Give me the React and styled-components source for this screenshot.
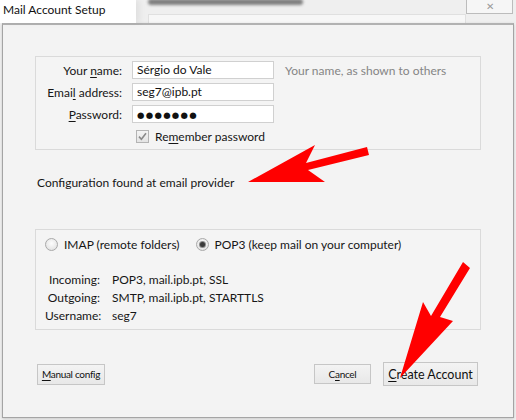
import React from "react";
import styled, { createGlobalStyle } from "styled-components";

const GlobalStyle = createGlobalStyle`
  html, body {
    margin: 0;
    padding: 0;
  }
  body {
    background: #f0f0f0;
    font-family: Lato, "Liberation Sans", sans-serif;
    font-size: 12px;
    color: #161616;
  }
`;

const Screen = styled.div`
  position: relative;
  width: 516px;
  height: 420px;
  overflow: hidden;
  display: flex;
  flex-direction: column;
  background: #f2f2f2;
`;

const TitleStrip = styled.div`
  height: 23px;
  flex-shrink: 0;
  display: flex;
`;

const TitleTab = styled.div`
  position: relative;
  z-index: 1;
  width: 133px;
  padding: 3px 0 0 3px;
  line-height: 14px;
  background: #fff;
  color: #111;
  box-shadow: 4px 0 6px rgba(0, 0, 0, 0.06);
`;

const Backdrop = styled.div`
  flex: 1;
  display: flex;
  background: #efefef;
  overflow: hidden;
`;

const BackColumn = styled.div`
  flex: 1;
  display: flex;
  flex-direction: column;
  padding-left: 12px;
`;

/* smudge of the window behind, out of focus */
const BlurredSmudge = styled.div`
  width: 155px;
  height: 6px;
  margin-top: -1px;
  border-radius: 3px;
  background: #5a5a5a;
  filter: blur(1.8px);
  opacity: 0.75;
`;

const BackPanel = styled.div`
  flex: 1;
  margin-top: 9px;
  border: 1px solid #e0e0e0;
  border-bottom: none;
  background: #f7f7f7;
`;

const CloseButton = styled.div`
  width: 45px;
  height: 13px;
  margin-right: 3px;
  border: 1px solid #bcbcbc;
  border-top: none;
  background: #f6f6f6;
  color: #9a9a9a;
  font-size: 10px;
  line-height: 12px;
  text-align: center;
`;

const Dialog = styled.div`
  flex: 1;
  display: flex;
  flex-direction: column;
  margin: 0 2px 2px 2px;
  padding: 31px 32px 0 32px;
  border: 1px solid #a4a4a4;
  border-top: 2px solid #b2b2b2;
  background: #f3f3f3;
  box-shadow: 0 1px 3px rgba(0, 0, 0, 0.18);
`;

const GroupBox = styled.div`
  height: ${(p) => p.$height}px;
  box-sizing: border-box;
  border: 1px solid #dadada;
  background: #f4f4f4;
`;

const IdentityGrid = styled.div`
  display: grid;
  grid-template-columns: 86px 142px 1fr;
  grid-auto-rows: 18px;
  column-gap: 10px;
  row-gap: 4px;
  align-items: center;
  padding-top: 4px;
`;

const FieldLabel = styled.label`
  text-align: right;
  white-space: nowrap;
`;

const Mnemonic = styled.span`
  text-decoration: underline;
  text-underline-offset: 2px;
`;

const Field = styled.div`
  height: 18px;
  box-sizing: border-box;
  padding: 0 4px;
  border: 1px solid #d0d0d0;
  background: #fff;
  line-height: 16px;
  color: #111;
  white-space: nowrap;
`;

const Dots = styled.span`
  font-family: "DejaVu Sans", sans-serif;
  font-size: 8.5px;
  letter-spacing: 1.3px;
`;

const Hint = styled.span`
  margin-left: 1px;
  color: #858585;
  white-space: nowrap;
`;

const CheckRow = styled.div`
  grid-column: 2 / 4;
  display: flex;
  align-items: center;
  gap: 6px;
  padding-left: 4px;
`;

const CheckBox = styled.span`
  width: 13px;
  height: 13px;
  box-sizing: border-box;
  border: 1px solid #b4b4b4;
  background: linear-gradient(#f4f4f4, #e4e4e4);
  display: flex;
  align-items: center;
  justify-content: center;
`;

const StatusText = styled.div`
  margin-top: 25px;
  padding-left: 2px;
  line-height: 16px;
`;

const ServerGroup = styled(GroupBox)`
  margin-top: 38px;
  padding: 6px 0 0 9px;
`;

const RadioRow = styled.div`
  display: flex;
  align-items: center;
  height: 16px;
  gap: 16px;
`;

const RadioOption = styled.label`
  display: flex;
  align-items: center;
  gap: 6px;
  white-space: nowrap;
`;

const Radio = styled.span`
  width: 13px;
  height: 13px;
  box-sizing: border-box;
  border-radius: 50%;
  border: 1px solid #a9a9a9;
  background: radial-gradient(circle at 50% 40%, #fdfdfd, #dcdcdc);
  display: flex;
  align-items: center;
  justify-content: center;
  &::after {
    content: "";
    width: 5px;
    height: 5px;
    border-radius: 50%;
    background: ${(p) => (p.$checked ? "#3a3a3a" : "transparent")};
    box-shadow: ${(p) => (p.$checked ? "0 0 0 1px #8c8c8c" : "none")};
  }
`;

const InfoGrid = styled.div`
  display: grid;
  grid-template-columns: 55px auto;
  grid-auto-rows: 18px;
  column-gap: 12px;
  align-items: center;
  margin-top: 18px;
`;

const InfoLabel = styled.span`
  text-align: right;
  white-space: nowrap;
`;

const ButtonRow = styled.div`
  display: flex;
  align-items: center;
  height: 24px;
  margin-top: 32px;
  padding: 0 3px 0 2px;
`;

const Button = styled.button`
  width: ${(p) => p.$width}px;
  height: ${(p) => p.$height}px;
  margin-left: ${(p) => (p.$push ? "auto" : "0")};
  margin-right: ${(p) => p.$gap || 0}px;
  padding: 0;
  border: 1px solid #c6c6c6;
  background: linear-gradient(#f3f3f3, #e8e8e8);
  font-family: Lato, "Liberation Sans", sans-serif;
  font-size: ${(p) => p.$size}px;
  letter-spacing: ${(p) => (p.$tight ? "-0.3px" : "0")};
  color: #111;
  white-space: nowrap;
`;

const ArrowLayer = styled.svg`
  position: absolute;
  left: 0;
  top: 0;
  width: 516px;
  height: 420px;
  pointer-events: none;
`;

export default function App() {
  return (
    <>
      <GlobalStyle />
      <Screen>
        <TitleStrip>
          <TitleTab>Mail Account Setup</TitleTab>
          <Backdrop>
            <BackColumn>
              <BlurredSmudge />
              <BackPanel />
            </BackColumn>
            <CloseButton>✕</CloseButton>
          </Backdrop>
        </TitleStrip>

        <Dialog>
          <GroupBox $height={94}>
            <IdentityGrid>
              <FieldLabel>
                Your <Mnemonic>n</Mnemonic>ame:
              </FieldLabel>
              <Field>Sérgio do Vale</Field>
              <Hint>Your name, as shown to others</Hint>

              <FieldLabel>
                Emai<Mnemonic>l</Mnemonic> address:
              </FieldLabel>
              <Field>seg7@ipb.pt</Field>
              <span />

              <FieldLabel>
                <Mnemonic>P</Mnemonic>assword:
              </FieldLabel>
              <Field>
                <Dots>●●●●●●●</Dots>
              </Field>
              <span />

              <span />
              <CheckRow>
                <CheckBox>
                  <svg width="9" height="9" viewBox="0 0 9 9">
                    <path d="M1 4.6 L3.4 7.2 L8 1.2" fill="none" stroke="#8a8a8a" strokeWidth="1.6" />
                  </svg>
                </CheckBox>
                <span>
                  Re<Mnemonic>m</Mnemonic>ember password
                </span>
              </CheckRow>
            </IdentityGrid>
          </GroupBox>

          <StatusText>Configuration found at email provider</StatusText>

          <ServerGroup $height={101}>
            <RadioRow>
              <RadioOption>
                <Radio />
                IMAP (remote folders)
              </RadioOption>
              <RadioOption>
                <Radio $checked />
                POP3 (keep mail on your computer)
              </RadioOption>
            </RadioRow>
            <InfoGrid>
              <InfoLabel>Incoming:</InfoLabel>
              <span>POP3, mail.ipb.pt, SSL</span>
              <InfoLabel>Outgoing:</InfoLabel>
              <span>SMTP, mail.ipb.pt, STARTTLS</span>
              <InfoLabel>Username:</InfoLabel>
              <span>seg7</span>
            </InfoGrid>
          </ServerGroup>

          <ButtonRow>
            <Button $width={68} $height={21} $size={10} $tight>
              <Mnemonic>M</Mnemonic>anual config
            </Button>
            <Button $width={57} $height={20} $size={10} $tight $push $gap={12}>
              C<Mnemonic>a</Mnemonic>ncel
            </Button>
            <Button $width={95} $height={24} $size={12.5}>
              <Mnemonic>C</Mnemonic>reate Account
            </Button>
          </ButtonRow>
        </Dialog>

        <ArrowLayer viewBox="0 0 516 420">
          <polygon points="248,182 315,145 306,163 367,147 369,155 308,170 325,182" fill="#ff0000" />
          <polygon points="463,262 470,268 440,317 453,321 400,378 423,302 431,316" fill="#ff0000" />
        </ArrowLayer>
      </Screen>
    </>
  );
}
